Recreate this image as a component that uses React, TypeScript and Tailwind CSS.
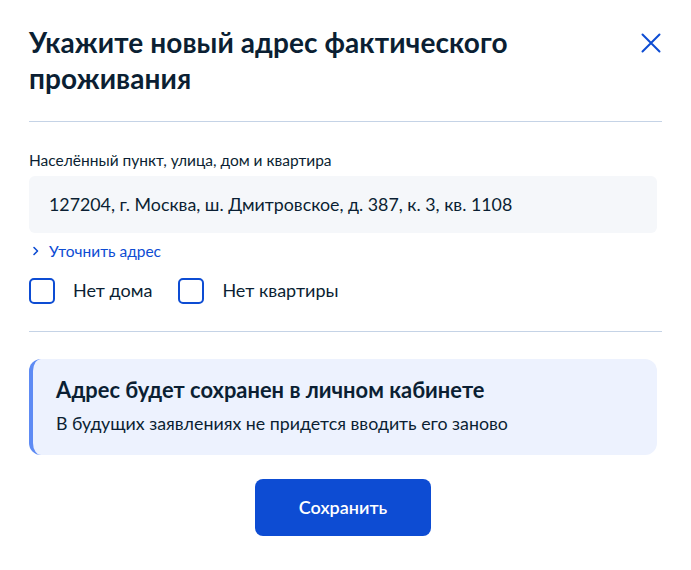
import React from "react";

const font = { fontFamily: "Lato, 'Noto Sans', sans-serif" };

function Checkbox({ label }: { label: string }) {
  return (
    <label className="flex items-center gap-[18px]">
      <span className="w-[26px] h-[26px] rounded-[5px] border-2 border-[#0d4cd3] bg-white" />
      <span className="text-[18px] text-[#0b1f33]">{label}</span>
    </label>
  );
}

export default function App() {
  return (
    <div style={font} className="w-[691px] h-[570px] bg-white px-[29px] pt-[24px] text-[#0b1f33]">
      {/* Header */}
      <div className="flex justify-between items-start">
        <h1 className="text-[28px] leading-[36px] font-bold tracking-[0.1px] w-[560px]">
          Укажите новый адрес фактического проживания
        </h1>
        <button className="mt-[9px] mr-[1px] text-[#0d4cd3]">
          <svg width="20" height="20" viewBox="0 0 20 20" fill="none" stroke="currentColor" strokeWidth="2" strokeLinecap="round">
            <path d="M1.5 1.5 L18.5 18.5 M18.5 1.5 L1.5 18.5" />
          </svg>
        </button>
      </div>

      <div className="mt-[25px] h-px bg-[#c5d3e6]" />

      {/* Address field */}
      <div className="mt-[28px] text-[15.5px] leading-[20px]">Населённый пункт, улица, дом и квартира</div>
      <div className="mt-[6px] h-[57px] w-[628px] rounded-[6px] bg-[#f5f7fa] flex items-center px-[20px] text-[17.8px]">
        127204, г. Москва, ш. Дмитровское, д. 387, к. 3, кв. 1108
      </div>

      <button className="mt-[8px] flex items-center gap-[9px] text-[15.5px] text-[#0d4cd3] leading-[20px]">
        <svg width="8" height="10" viewBox="0 0 8 10" fill="none" stroke="currentColor" strokeWidth="1.6" strokeLinecap="round" strokeLinejoin="round" className="ml-[3px]">
          <path d="M2 1.5 L5.5 5 L2 8.5" />
        </svg>
        Уточнить адрес
      </button>

      <div className="mt-[16px] flex gap-[26px]">
        <Checkbox label="Нет дома" />
        <Checkbox label="Нет квартиры" />
      </div>

      <div className="mt-[27px] h-px bg-[#c5d3e6]" />

      {/* Info */}
      <div className="mt-[27px] w-[628px] h-[96px] rounded-[12px] bg-[#edf2fe] border-l-[4px] border-[#5e8bf4] pl-[23px] pt-[17px]">
        <div className="text-[21.9px] font-bold leading-[28px]">Адрес будет сохранен в личном кабинете</div>
        <div className="mt-[8px] text-[17.8px] leading-[22px]">В будущих заявлениях не придется вводить его заново</div>
      </div>

      <div className="mt-[24px] flex justify-center pr-[5px]">
        <button className="w-[176px] h-[57px] rounded-[8px] bg-[#0d4cd3] text-white text-[18px] font-semibold">
          Сохранить
        </button>
      </div>
    </div>
  );
}
